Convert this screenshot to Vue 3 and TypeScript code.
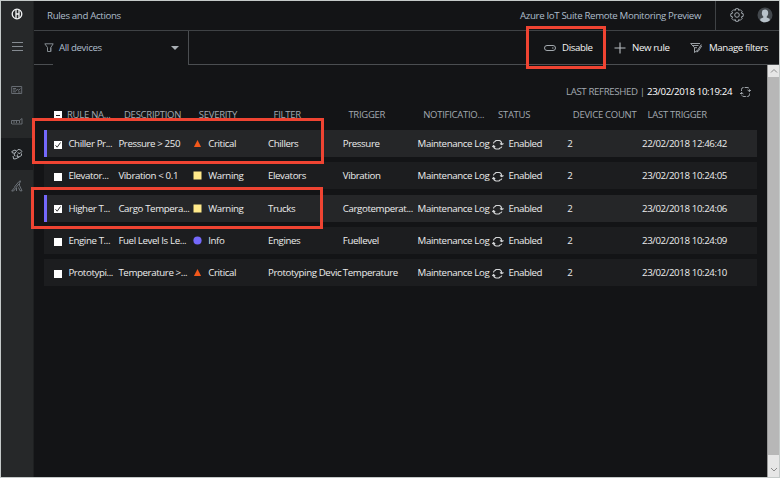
<script setup lang="ts">
type Severity = 'Critical' | 'Warning' | 'Info'

interface Rule {
  name: string
  description: string
  severity: Severity
  filter: string
  trigger: string
  last: string
  selected: boolean
}

const headers: string[] = ['DESCRIPTION', 'SEVERITY', 'FILTER', 'TRIGGER', 'NOTIFICATIO...', 'STATUS', 'DEVICE COUNT', 'LAST TRIGGER']

const rules: Rule[] = [
  { name: 'Chiller Pr...', description: 'Pressure > 250', severity: 'Critical', filter: 'Chillers', trigger: 'Pressure', last: '22/02/2018 12:46:42', selected: true },
  { name: 'Elevator...', description: 'Vibration < 0.1', severity: 'Warning', filter: 'Elevators', trigger: 'Vibration', last: '23/02/2018 10:24:05', selected: false },
  { name: 'Higher T...', description: 'Cargo Tempera...', severity: 'Warning', filter: 'Trucks', trigger: 'Cargotemperat...', last: '23/02/2018 10:24:06', selected: true },
  { name: 'Engine T...', description: 'Fuel Level Is Le...', severity: 'Info', filter: 'Engines', trigger: 'Fuellevel', last: '23/02/2018 10:24:09', selected: false },
  { name: 'Prototypi...', description: 'Temperature >...', severity: 'Critical', filter: 'Prototyping Devic', trigger: 'Temperature', last: '23/02/2018 10:24:10', selected: false },
]
</script>

<template>
  <div class="app">
    <aside class="side">
      <div class="logo">
        <svg width="12" height="12" viewBox="0 0 12 12" fill="none" stroke="#f2f4f5" stroke-width="1.3"><circle cx="6" cy="6" r="4.800" /><path d="M5 1v10M8 2v8M5 6h3" /></svg>
      </div>
      <div class="burger">
        <svg width="12" height="10" viewBox="0 0 12 10" stroke="#858b91"><path d="M0 .5h11M0 4.500h11M0 8.500h11" /></svg>
      </div>
      <nav>
        <div class="nav-item">
          <svg width="12" height="10" viewBox="0 0 12 10" fill="none" stroke="#6d7379" stroke-width=".9"><path d="M.7 1.500h10v7h-10zM2 3.500h3M2 5h2.500M2 6.800h3M5 6l1.500-2 1 1.500L9.500 3.500M7 7h2.500" /></svg>
        </div>
        <div class="nav-item">
          <svg width="12" height="10" viewBox="0 0 12 10" fill="none" stroke="#6d7379" stroke-width=".9"><path d="M.5 3.500h8l2.500-2M.5 3.500V7M3 3.500V6M5.500 3.500V6M8.500 3.500V6M11 1.500V7M1 7h10" /></svg>
        </div>
        <div class="nav-item active">
          <svg width="12" height="12" viewBox="0 0 12 12" fill="none" stroke="#a9b0b6" stroke-width="1"><path d="M.8 3.500L4 2l1.500 1.200L4 5.200 1.500 5zM5.500 3.200L7 1.500l2.500.3 1.300 1.700L9 5.500 6.500 4.800M4 5.200L3 7l1.500 1M10.500 5.500v2L8 9 6 8.500l.5-2M2 8l.7 3 2.300-.3L8 9" /></svg>
        </div>
        <div class="nav-item">
          <svg width="12" height="12" viewBox="0 0 12 12" fill="none" stroke="#6d7379" stroke-width="1"><path d="M.7 11l3-3.500 1 1L2.500 11H.7M3.500 7L8 1.500l1.500-.7M9.500 1L8.500 3.500 5 7.500M8.500 3.500v2l2.500 5.300H9L7.500 7.500M5.500 7.500V11" /></svg>
        </div>
      </nav>
    </aside>

    <div class="main">
      <header class="topbar">
        <span class="title">Rules and Actions</span>
        <span class="product">Azure IoT Suite Remote Monitoring Preview</span>
        <div class="account">
          <svg width="14" height="14" viewBox="0 0 14 14" fill="none" stroke="#a0a7ad" stroke-width="1"><path d="M5.700.7h2.600l.4 1.700 1.500-.8 2 2-.9 1.500 1.900.6v2.600l-1.900.6.9 1.500-2 2-1.500-.8-.4 1.700H5.700l-.4-1.700-1.500.8-2-2 .9-1.500L.8 8.300V5.700l1.900-.6-.9-1.500 2-2 1.500.8z" /><circle cx="7" cy="7" r="2.300" /></svg>
          <svg width="16" height="16" viewBox="0 0 16 16"><circle cx="8" cy="8" r="7.500" fill="#43484d" /><path d="M4.800 6a3.200 3.500 0 0 1 6.400 0c0 1.900-.8 2.900-1.500 3.500v1l3 1.200v1.800a7 7 0 0 1-9.400 0v-1.800l3-1.200v-1C5.600 8.900 4.800 7.900 4.800 6z" fill="#b8c2ca" /></svg>
        </div>
      </header>

      <div class="toolbar">
        <div class="picker">
          <svg width="10" height="10" viewBox="0 0 10 10" fill="none" stroke="#90979d" stroke-width=".9"><path d="M.8.8h8.400L6.800 4.500v4H3.500v-4zM6.800 4.500v4" /></svg>
          <span>All devices</span>
          <i class="caret"></i>
        </div>
        <div class="actions">
          <div class="disable">
            <svg width="12" height="8" viewBox="0 0 12 8" fill="none" stroke="#a3a9ae"><rect x=".5" y="1.500" width="11" height="5" rx="2.500" /><path d="M8 4h1.500" /></svg>
            <span>Disable</span>
          </div>
          <div class="new-rule">
            <svg width="12" height="12" viewBox="0 0 12 12" stroke="#b8bdc1" stroke-width="1.100"><path d="M6 .5v11M.5 6h11" /></svg>
            <span>New rule</span>
          </div>
          <div class="filters">
            <svg width="12" height="12" viewBox="0 0 12 12" fill="none" stroke="#a9afb4" stroke-width=".9"><path d="M10 1.500H.7l3.800 4.200v4.800L7 8.500M2.500 3.500h6M11.300 2.500L7.500 8.500 6.800 10l1.500-.8 3.700-5.700M4.500 5.700H7" /></svg>
            <span>Manage filters</span>
          </div>
        </div>
      </div>

      <div class="body">
        <section class="content">
          <div class="refreshed">
            <span class="label">LAST REFRESHED |</span>
            <span class="stamp">23/02/2018 10:19:24</span>
            <svg width="11" height="12" viewBox="0 0 11 12" fill="none" stroke="#a0a6ab"><path d="M1.500 5V3.500Q1.500 1.500 3.500 1.500h3.500Q9.500 1.500 9.500 4v1.500M7.500 4l2 1.500L11 4M9.500 7.500v1q0 2-2 2H4Q1.500 10.500 1.500 8V6.500M0 8l1.500-1.500L3.500 8" stroke-dasharray="4.500 1" /></svg>
          </div>
          <div class="thead">
            <span class="box minus"></span>
            <span>RULE NA...</span>
            <span v-for="header in headers" :key="header">{{ header }}</span>
          </div>
          <div class="rows">
            <div v-for="rule in rules" :key="rule.name" :class="['row', { selected: rule.selected }]">
              <span class="box">
                <svg v-if="rule.selected" width="8" height="8" viewBox="0 0 8 8" fill="none" stroke="#333" stroke-width="1"><path d="M1.500 4.300l1.700 1.900L6.500 1.500" /></svg>
              </span>
              <span>{{ rule.name }}</span>
              <span>{{ rule.description }}</span>
              <span class="with-icon">
                <svg width="9" height="9" viewBox="0 0 9 9">
                  <path v-if="rule.severity === 'Critical'" d="M4.500 1L8.100 8H.9z" fill="#f2581b" />
                  <rect v-else-if="rule.severity === 'Warning'" x=".5" y=".5" width="8" height="8" fill="#ffe98a" />
                  <circle v-else cx="4.500" cy="4.500" r="4.100" fill="#7468fa" />
                </svg>
                <span>{{ rule.severity }}</span>
              </span>
              <span>{{ rule.filter }}</span>
              <span>{{ rule.trigger }}</span>
              <span>Maintenance Log</span>
              <span class="with-icon status">
                <svg width="12" height="11" viewBox="0 0 12 11" fill="none" stroke="#d4d6d8" stroke-width="1.100"><path d="M1.500 4.500Q1.500 3 3 2.500L4 1.500h3.500Q9.500 2 9.700 5M8 4.500l1.700 1.200L11.500 4.500M9.800 7.500Q9.500 9 8 9L7 10H4Q1.500 9.500 1.500 6.800M.2 8l1.300-1.400L3.200 8" /></svg>
                <span>Enabled</span>
              </span>
              <span>2</span>
              <span>{{ rule.last }}</span>
            </div>
          </div>
        </section>
        <div class="scrollbar">
          <div class="arrow"><svg width="8" height="6" viewBox="0 0 8 6" fill="none" stroke="#8b8b8b"><path d="M1 4.500l3-3 3 3" /></svg></div>
          <div class="thumb"></div>
          <div class="arrow down"><svg width="8" height="6" viewBox="0 0 8 6" fill="none" stroke="#8b8b8b"><path d="M1 1l3 3 3-3" /></svg></div>
        </div>
      </div>
    </div>

    <div class="mark mark-action"></div>
    <div class="mark mark-first"></div>
    <div class="mark mark-third"></div>
  </div>
</template>

<style>
body {
  background: #131416;
  overflow: hidden;
}
</style>

<style scoped>
* {
  box-sizing: border-box;
}
.app {
  position: relative;
  display: flex;
  width: 780px;
  height: 478px;
  border: 1px solid #c5cac9;
  background: #131416;
  color: #eceded;
  font: 500 9.700px/14px "Open Sans", "Noto Sans", sans-serif;
  letter-spacing: -0.380px;
  white-space: nowrap;
}
svg {
  display: block;
  flex: none;
}
.side {
  width: 33px;
  background: #262829;
  border-right: 1px solid #1e2021;
}
.logo {
  padding: 7px 0 0 10px;
  height: 40px;
}
.burger {
  padding: 1px 0 0 11px;
  height: 33px;
}
.nav-item {
  height: 32px;
  display: flex;
  align-items: center;
  padding-left: 10px;
}
.nav-item.active {
  background: #191b1d;
}
.main {
  flex: 1;
  display: flex;
  flex-direction: column;
  min-width: 0;
}
.topbar {
  height: 30px;
  flex: none;
  display: flex;
  align-items: center;
  border-bottom: 1px solid #3f4245;
  color: #aebdcb;
  font-weight: 400;
  letter-spacing: -0.350px;
}
.title {
  padding-left: 13px;
}
.product {
  margin-left: auto;
  width: 195px;
}
.account {
  width: 64px;
  height: 29px;
  display: flex;
  align-items: center;
  gap: 13px;
  padding: 0 0 2px 14px;
  border-left: 1px solid #3f4245;
}
.toolbar {
  height: 34px;
  flex: none;
  display: flex;
}
.picker {
  width: 155px;
  display: flex;
  align-items: center;
  padding-left: 10px;
  border-right: 1px solid #4b4e51;
  color: #aebdcb;
  font-weight: 400;
  background: linear-gradient(#4b4e51, #4b4e51) 0 100% / 19px 1px no-repeat;
}
.picker span {
  margin-left: 5px;
}
.caret {
  margin-left: auto;
  margin-right: 9px;
  border: 4px solid transparent;
  border-top-color: #a9afb4;
  border-bottom: 0;
}
.actions {
  flex: 1;
  display: flex;
  align-items: center;
  border-bottom: 1px solid #4b4e51;
  color: #f4f4f4;
}
.actions > div {
  display: flex;
  align-items: center;
}
.disable {
  margin-left: 355px;
  gap: 6px;
  width: 70px;
}
.new-rule {
  gap: 6px;
  width: 76px;
}
.filters {
  gap: 7px;
}
.body {
  flex: 1;
  display: flex;
  min-height: 0;
}
.content {
  flex: 1;
  padding-left: 10px;
}
.refreshed {
  display: flex;
  align-items: center;
  padding: 19px 0 0 522px;
  height: 34px;
}
.label {
  width: 81px;
  color: #a2a9b0;
  font-weight: 400;
}
.stamp {
  width: 93px;
  color: #fff;
}
.thead {
  display: grid;
  grid-template-columns: 13px 57px repeat(7, 74.800px) 90px;
  align-items: center;
  padding-left: 10px;
  margin-top: 9px;
  height: 14px;
  color: #a2a9b0;
  font-size: 9.500px;
  font-weight: 400;
  letter-spacing: -0.270px;
}
.rows {
  display: grid;
  gap: 5.300px;
  margin-top: 8.200px;
  width: 713px;
}
.row {
  display: grid;
  grid-template-columns: 14.400px 50px repeat(7, 74.800px) 90px;
  align-items: center;
  height: 27px;
  padding: 1px 0 0 10px;
  background: #1c1d1f;
}
.row.selected {
  background: #252628;
  border-left: 3px solid #7468fa;
  padding-left: 7px;
}
.box {
  width: 8px;
  height: 8px;
  background: #fff;
}
.row .box {
  margin-top: 1px;
}
.minus {
  background: linear-gradient(#222, #222) center / 4px 1px no-repeat #fff;
}
.with-icon {
  display: flex;
  align-items: center;
  gap: 6px;
}
.with-icon svg {
  margin-top: -1px;
}
.status {
  gap: 4px;
}
.status svg {
  margin-top: 1px;
}
.scrollbar {
  width: 12px;
  flex: none;
  display: flex;
  flex-direction: column;
  background: #b7b7b7;
  border-left: 1px solid #999;
}
.arrow {
  height: 12px;
  background: #e6e6e6;
  display: flex;
  align-items: center;
  justify-content: center;
}
.thumb {
  flex: 1;
}
.arrow.down {
  height: 22px;
  padding-top: 8px;
}
.mark {
  position: absolute;
  border: 3px solid #ef4432;
}
.mark-action {
  left: 525px;
  top: 25px;
  width: 80px;
  height: 43px;
}
.mark-first {
  left: 31px;
  top: 117px;
  width: 292px;
  height: 46px;
}
.mark-third {
  left: 30px;
  top: 186px;
  width: 292px;
  height: 42px;
}
</style>
